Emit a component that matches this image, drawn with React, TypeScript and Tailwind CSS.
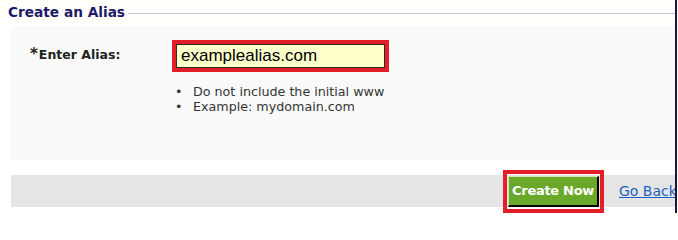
import React from 'react';

const hints = ['Do not include the initial www', 'Example: mydomain.com'];

const App: React.FC = () => {
  return (
    <div className="w-[678px] h-[213px] bg-white overflow-hidden font-['DejaVu_Sans',Verdana,sans-serif]">
      <div className="w-[677px] h-[213px] border-r-2 border-[#1b1442] flex flex-col">
        {/* Legend + rule */}
        <div className="flex items-center h-[26px] bg-[#fffffb]">
          <h2 className="pl-[8px] pr-[3px] text-[13.7px] font-bold text-[#1d1a6b] leading-none">Create an Alias</h2>
          <div className="flex-1 h-px bg-[#b9c6d6]" />
        </div>

        {/* Form panel */}
        <div className="ml-[11px] h-[134px] bg-[#fafafa] pt-[14px]">
          <div className="flex items-start">
            <label className="w-[161px] pl-[19px] pt-[6px] flex items-start text-[12.5px] font-bold text-[#222]">
              <span className="text-[15px] leading-none mr-[1px] mt-[1px]">*</span>
              <span>Enter Alias:</span>
            </label>
            <div className="border-4 border-[#e31e27]">
              <input
                type="text"
                defaultValue="examplealias.com"
                className="block w-[209px] h-[24px] border border-[#2a2a2a] bg-[#ffffcc] px-[4px] font-['Liberation_Sans',Arial,sans-serif] text-[17px] text-black outline-none"
              />
            </div>
          </div>
          <ul className="mt-[12px] ml-[164px] text-[12.7px] leading-[15px] text-[#333]">
            {hints.map(h => (
              <li key={h} className="flex">
                <span className="w-[18px]">•</span>
                <span>{h}</span>
              </li>
            ))}
          </ul>
        </div>

        {/* Action bar */}
        <div className="mt-[15px] ml-[11px] h-[32px] bg-[#e5e5e5] flex items-center justify-end">
          <div className="h-[43px] shrink-0 border-4 border-[#e31e27] px-[1px] pt-[2px] flex items-start">
            <button className="h-[31px] px-[3px] bg-[#6aa82a] border-l border-t border-[#d9e6b5] border-b-2 border-r-2 border-b-black border-r-black text-white text-[13px] tracking-[-0.3px] font-bold leading-none">
              Create Now
            </button>
          </div>
          <a href="#" className="ml-[15px] w-[56px] shrink-0 whitespace-nowrap overflow-hidden text-[14px] text-[#1f5fbf] underline">
            Go Back
          </a>
        </div>
      </div>
    </div>
  );
};

export default App;
